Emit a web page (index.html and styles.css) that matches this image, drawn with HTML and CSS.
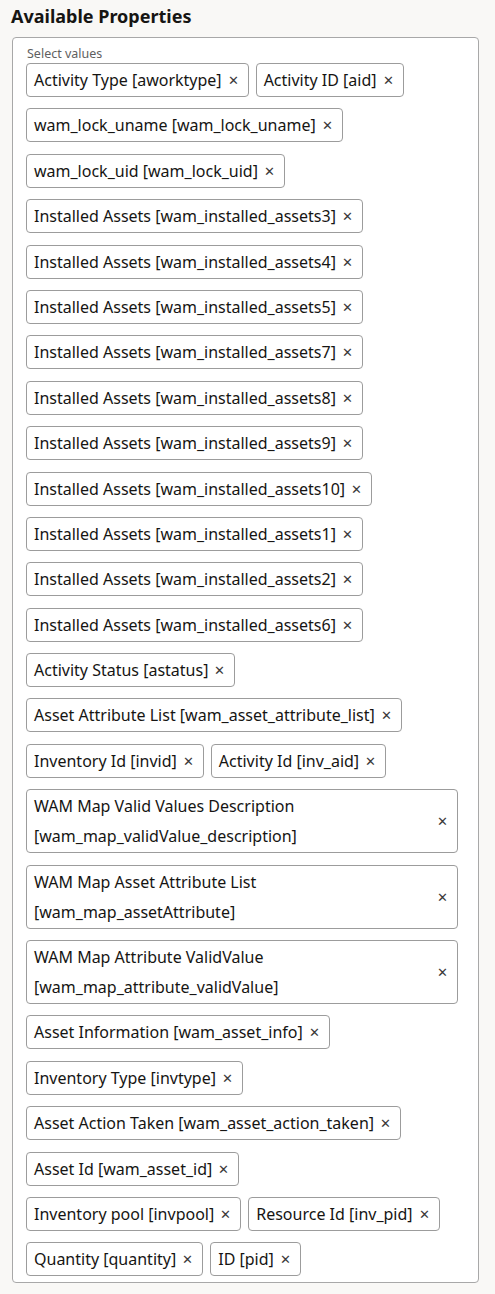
FILE: index.html
```html
<!doctype html>
<html>
<head>
  <meta charset="utf-8">
  <link rel="stylesheet" href="styles.css">
</head>
<body>
<h2 class="title">Available Properties</h2>
<div class="select_box">
  <div class="select_label">Select values</div>
  <div class="chips">
    <div class="chip"><span class="chip_text">Activity Type [aworktype]</span><span class="chip_close">&#x2715;</span></div>
    <div class="chip"><span class="chip_text">Activity ID [aid]</span><span class="chip_close">&#x2715;</span></div>
    <div class="chip"><span class="chip_text">wam_lock_uname [wam_lock_uname]</span><span class="chip_close">&#x2715;</span></div>
    <div class="chip"><span class="chip_text">wam_lock_uid [wam_lock_uid]</span><span class="chip_close">&#x2715;</span></div>
    <div class="chip"><span class="chip_text">Installed Assets [wam_installed_assets3]</span><span class="chip_close">&#x2715;</span></div>
    <div class="chip"><span class="chip_text">Installed Assets [wam_installed_assets4]</span><span class="chip_close">&#x2715;</span></div>
    <div class="chip"><span class="chip_text">Installed Assets [wam_installed_assets5]</span><span class="chip_close">&#x2715;</span></div>
    <div class="chip"><span class="chip_text">Installed Assets [wam_installed_assets7]</span><span class="chip_close">&#x2715;</span></div>
    <div class="chip"><span class="chip_text">Installed Assets [wam_installed_assets8]</span><span class="chip_close">&#x2715;</span></div>
    <div class="chip"><span class="chip_text">Installed Assets [wam_installed_assets9]</span><span class="chip_close">&#x2715;</span></div>
    <div class="chip"><span class="chip_text">Installed Assets [wam_installed_assets10]</span><span class="chip_close">&#x2715;</span></div>
    <div class="chip"><span class="chip_text">Installed Assets [wam_installed_assets1]</span><span class="chip_close">&#x2715;</span></div>
    <div class="chip"><span class="chip_text">Installed Assets [wam_installed_assets2]</span><span class="chip_close">&#x2715;</span></div>
    <div class="chip"><span class="chip_text">Installed Assets [wam_installed_assets6]</span><span class="chip_close">&#x2715;</span></div>
    <div class="chip"><span class="chip_text">Activity Status [astatus]</span><span class="chip_close">&#x2715;</span></div>
    <div class="chip"><span class="chip_text">Asset Attribute List [wam_asset_attribute_list]</span><span class="chip_close">&#x2715;</span></div>
    <div class="chip"><span class="chip_text">Inventory Id [invid]</span><span class="chip_close">&#x2715;</span></div>
    <div class="chip"><span class="chip_text">Activity Id [inv_aid]</span><span class="chip_close">&#x2715;</span></div>
    <div class="chip chip_wide"><span class="chip_text">WAM Map Valid Values Description<br>[wam_map_validValue_description]</span><span class="chip_close">&#x2715;</span></div>
    <div class="chip chip_wide"><span class="chip_text">WAM Map Asset Attribute List<br>[wam_map_assetAttribute]</span><span class="chip_close">&#x2715;</span></div>
    <div class="chip chip_wide"><span class="chip_text">WAM Map Attribute ValidValue<br>[wam_map_attribute_validValue]</span><span class="chip_close">&#x2715;</span></div>
    <div class="chip"><span class="chip_text">Asset Information [wam_asset_info]</span><span class="chip_close">&#x2715;</span></div>
    <div class="chip"><span class="chip_text">Inventory Type [invtype]</span><span class="chip_close">&#x2715;</span></div>
    <div class="chip"><span class="chip_text">Asset Action Taken [wam_asset_action_taken]</span><span class="chip_close">&#x2715;</span></div>
    <div class="chip"><span class="chip_text">Asset Id [wam_asset_id]</span><span class="chip_close">&#x2715;</span></div>
    <div class="chip"><span class="chip_text">Inventory pool [invpool]</span><span class="chip_close">&#x2715;</span></div>
    <div class="chip"><span class="chip_text">Resource Id [inv_pid]</span><span class="chip_close">&#x2715;</span></div>
    <div class="chip"><span class="chip_text">Quantity [quantity]</span><span class="chip_close">&#x2715;</span></div>
    <div class="chip"><span class="chip_text">ID [pid]</span><span class="chip_close">&#x2715;</span></div>
  </div>
</div>
</body>
</html>
```
FILE: styles.css
```css
body {
  margin: 0;
  background: #f9f8f6;
  color: #161513;
  font-family: "Noto Sans", "Liberation Sans", sans-serif;
}

.title {
  margin: 0;
  padding: 4px 0 0 11px;
  height: 37px;
  box-sizing: border-box;
  font-size: 18px;
  font-weight: bold;
  line-height: 24px;
}

.select_box {
  margin: 0 16px 0 12px;
  border: 1px solid #a8a8a8;
  border-radius: 4px;
  background: #fff;
  padding: 9px 20px 6px 13px;
}

.select_label {
  font-size: 12.5px;
  line-height: 13px;
  color: #5f5f5f;
  padding-left: 1px;
  margin-bottom: 3px;
}

.chips {
  display: flex;
  flex-wrap: wrap;
  row-gap: 11.4px;
  column-gap: 7px;
}

.chip {
  display: flex;
  align-items: center;
  border: 1px solid #9c9c9c;
  border-radius: 4px;
  padding: 1px 9px 1px 7px;
  font-size: 16px;
  line-height: 30px;
}

.chip_wide {
  flex: 1 1 100%;
  justify-content: space-between;
  padding-right: 9px;
}

.chip_close {
  margin-left: 6px;
  font-size: 13px;
  color: #3a3a3a;
}
```
